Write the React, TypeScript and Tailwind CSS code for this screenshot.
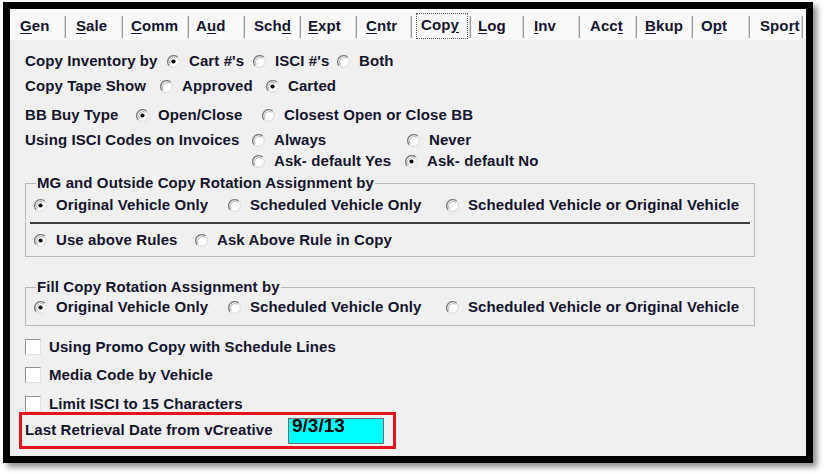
import React from 'react';

const font = "font-['Liberation_Sans',Arial,sans-serif]";

interface Tab {
  pre: string;
  u: string;
  post: string;
  cls: string;
}

// each tab cell runs from divider to divider
const TABS: Tab[] = [
  { pre: '', u: 'G', post: 'en', cls: 'w-[56px] pl-[10px]' },
  { pre: '', u: 'S', post: 'ale', cls: 'w-[57px] pl-[10px]' },
  { pre: '', u: 'C', post: 'omm', cls: 'w-[66px] pl-[8px]' },
  { pre: 'A', u: 'u', post: 'd', cls: 'w-[56px] pl-[7px]' },
  { pre: 'Sch', u: 'd', post: '', cls: 'w-[56px] pl-[9px]' },
  { pre: '', u: 'E', post: 'xpt', cls: 'w-[56px] pl-[7px]' },
  { pre: '', u: 'C', post: 'ntr', cls: 'w-[55px] pl-[9px]' },
];

const TABS_RIGHT: Tab[] = [
  { pre: '', u: 'L', post: 'og', cls: 'w-[53px] pl-[7px]' },
  { pre: '', u: 'I', post: 'nv', cls: 'w-[56px] pl-[10px]' },
  { pre: 'Acc', u: 't', post: '', cls: 'w-[57px] pl-[10px]' },
  { pre: '', u: 'B', post: 'kup', cls: 'w-[56px] pl-[8px]' },
  { pre: 'O', u: 'p', post: 't', cls: 'w-[57px] pl-[8px]' },
  { pre: 'Spo', u: 'r', post: 't', cls: 'w-[53px] pl-[10px]' },
];

const TabCell: React.FC<{ tab: Tab }> = ({ tab }) => (
  <div className={`${tab.cls} h-full flex items-center justify-between shrink-0`}>
    <span className="pt-[3px]">
      {tab.pre}
      <span className="underline underline-offset-2">{tab.u}</span>
      {tab.post}
    </span>
    <span className="h-[22px] mt-[5px] w-[2px] border-l border-l-[#d8d8d8] border-r border-r-[#9a9a9a]" />
  </div>
);

const RadioDot: React.FC<{ checked?: boolean }> = ({ checked }) => (
  <svg width="13" height="13" viewBox="0 0 13 13" className="shrink-0">
    <circle cx="6.5" cy="6.5" r="6" fill="#ffffff" />
    <path d="M2.26 10.74 A6 6 0 0 1 10.74 2.26" stroke="#7c7c7c" strokeWidth="1.4" fill="none" />
    <path d="M10.74 2.26 A6 6 0 0 1 2.26 10.74" stroke="#dedede" strokeWidth="1.3" fill="none" />
    <path d="M3.3 9.7 A4.6 4.6 0 0 1 9.7 3.3" stroke="#b4b4b4" strokeWidth="1" fill="none" />
    {checked && <circle cx="6.5" cy="6.5" r="2.1" fill="#000000" />}
  </svg>
);

const Radio: React.FC<{ label: string; checked?: boolean; className?: string }> = ({
  label,
  checked,
  className = '',
}) => (
  <div className={`flex items-center gap-[9px] shrink-0 ${className}`}>
    <RadioDot checked={checked} />
    <span className="whitespace-nowrap">{label}</span>
  </div>
);

const Check: React.FC<{ label: string }> = ({ label }) => (
  <div className="flex items-center gap-[8px] h-[20px]">
    <span className="w-[16px] h-[16px] bg-white border border-t-[#8f8f8f] border-l-[#8f8f8f] border-b-[#e2e2e2] border-r-[#e2e2e2]" />
    <span className="whitespace-nowrap">{label}</span>
  </div>
);

export default function App() {
  return (
    <div className={`w-[826px] h-[474px] bg-white pt-[2px] pl-[3px] ${font} font-bold text-[15px] text-[#14142e] tracking-[0.1px]`}>
      <div className="w-[810px] h-[461px] border-[7px] border-black bg-[#f0f0f0] shadow-[4px_4px_6px_rgba(0,0,0,0.45)] flex flex-col">
        {/* tab strip */}
        <div className="h-[32px] bg-[#f9f9f9] flex items-stretch border-b border-b-[#f0f0f0]">
          {TABS.map((t) => (
            <TabCell key={t.pre + t.u + t.post} tab={t} />
          ))}
          <div className="w-[59px] h-full flex items-center shrink-0 pl-[4px]">
            <span className="mt-[3px] border border-dotted border-[#555] px-[4px] h-[26px] leading-[22px] w-[54px]">
              Cop<span className="underline underline-offset-2">y</span>
            </span>
            <span className="h-[22px] mt-[5px] ml-[1px] w-[2px] border-l border-l-[#d8d8d8] border-r border-r-[#9a9a9a]" />
          </div>
          {TABS_RIGHT.map((t) => (
            <TabCell key={t.pre + t.u + t.post} tab={t} />
          ))}
        </div>

        {/* content */}
        <div className="flex flex-col pl-[15px]">
          <div className="mt-[9px] h-[22px] flex items-center">
            <span className="w-[142px] shrink-0">Copy Inventory by</span>
            <Radio label="Cart #'s" checked className="w-[86px]" />
            <Radio label="ISCI #'s" className="w-[84px]" />
            <Radio label="Both" />
          </div>
          <div className="mt-[3px] h-[22px] flex items-center">
            <span className="w-[135px] shrink-0">Copy Tape Show</span>
            <Radio label="Approved" className="w-[106px]" />
            <Radio label="Carted" checked />
          </div>
          <div className="mt-[7px] h-[22px] flex items-center">
            <span className="w-[111px] shrink-0">BB Buy Type</span>
            <Radio label="Open/Close" checked className="w-[126px]" />
            <Radio label="Closest Open or Close BB" />
          </div>
          <div className="mt-[4px] flex">
            <span className="w-[227px] shrink-0 h-[20px] leading-[20px]">Using ISCI Codes on Invoices</span>
            <div className="flex flex-col gap-[1px]">
              <div className="h-[20px] flex items-center">
                <Radio label="Always" className="w-[155px]" />
                <Radio label="Never" />
              </div>
              <div className="h-[20px] flex items-center">
                <Radio label="Ask- default Yes" className="w-[153px]" />
                <Radio label="Ask- default No" checked />
              </div>
            </div>
          </div>

          <fieldset className="mt-[4px] w-[730px] border border-[#b9b9b9] px-0 pb-[6px]">
            <legend className="ml-[10px] px-[1px] leading-[16px]">MG and Outside Copy Rotation Assignment by</legend>
            <div className="mt-[4px] h-[20px] flex items-center pl-[8px]">
              <Radio label="Original Vehicle Only" checked className="w-[194px]" />
              <Radio label="Scheduled Vehicle Only" className="w-[218px]" />
              <Radio label="Scheduled Vehicle or Original Vehicle" />
            </div>
            <div className="mt-[7px] mx-[4px] h-[2px] bg-[#3c3c3c]" />
            <div className="mt-[6px] h-[20px] flex items-center pl-[8px]">
              <Radio label="Use above Rules" checked className="w-[161px]" />
              <Radio label="Ask Above Rule in Copy" />
            </div>
          </fieldset>

          <fieldset className="mt-[22px] w-[730px] border border-[#b9b9b9] px-0 pb-[8px]">
            <legend className="ml-[10px] px-[1px] leading-[16px]">Fill Copy Rotation Assignment by</legend>
            <div className="mt-[2px] h-[20px] flex items-center pl-[8px]">
              <Radio label="Original Vehicle Only" checked className="w-[194px]" />
              <Radio label="Scheduled Vehicle Only" className="w-[218px]" />
              <Radio label="Scheduled Vehicle or Original Vehicle" />
            </div>
          </fieldset>

          <div className="mt-[11px]">
            <Check label="Using Promo Copy with Schedule Lines" />
          </div>
          <div className="mt-[8px]">
            <Check label="Media Code by Vehicle" />
          </div>
          <div className="mt-[9px]">
            <Check label="Limit ISCI to 15 Characters" />
          </div>

          {/* highlighted field */}
          <div className="relative -mt-[2px] -ml-[6px] w-[377px] h-[37px] border-[3px] border-[#e3141c] bg-[#f0f0f0] flex items-center pl-[3px]">
            <span className="w-[263px] shrink-0 whitespace-nowrap">Last Retrieval Date from vCreative</span>
            <div className="w-[96px] h-[26px] bg-[#00ffff] border border-[#6e6e6e] pl-[3px] text-[19px] leading-[14px] tracking-normal text-black">
              9/3/13
            </div>
          </div>
        </div>
      </div>
    </div>
  );
}
